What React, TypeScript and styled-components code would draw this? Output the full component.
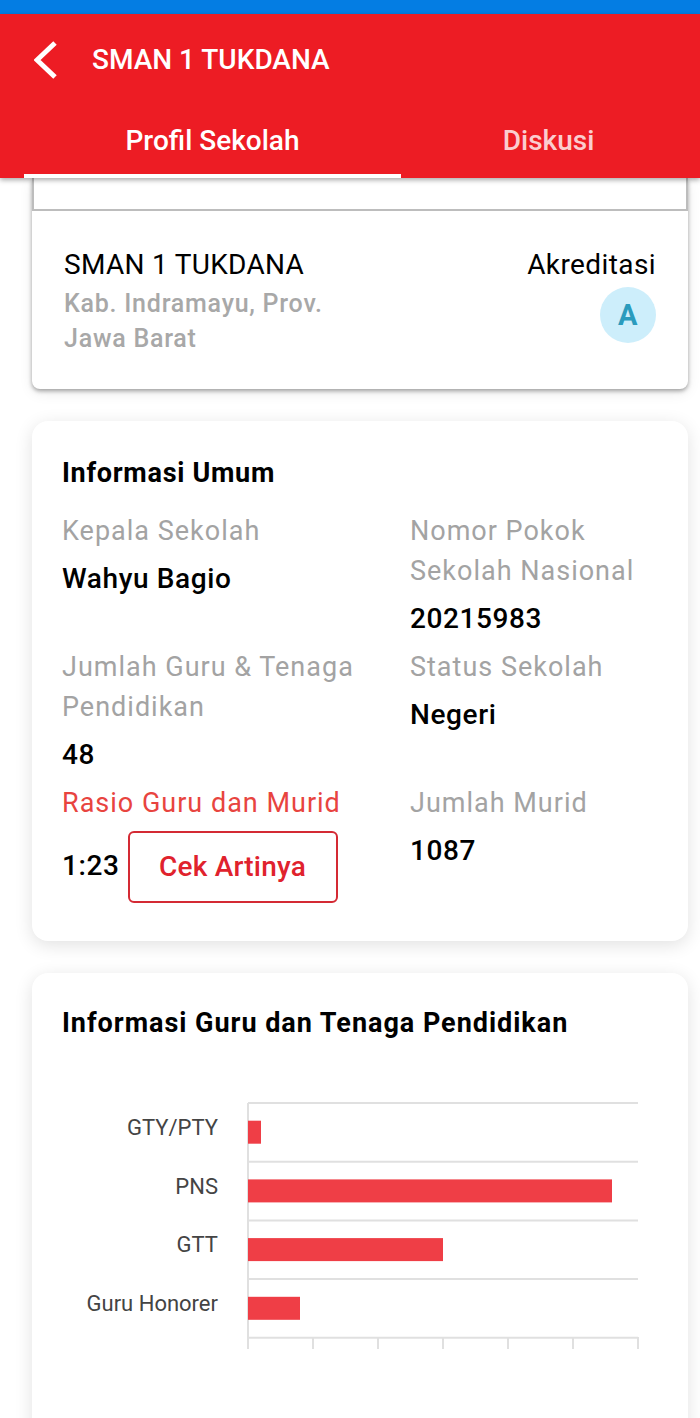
import React from 'react';
import styled, {createGlobalStyle} from 'styled-components';

const GlobalStyle = createGlobalStyle`
  html, body {
    margin: 0;
    padding: 0;
    background: #fff;
  }
  * {
    box-sizing: border-box;
  }
`;

const Page = styled.div`
  width: 700px;
  height: 1418px;
  overflow: hidden;
  display: flex;
  flex-direction: column;
  font-family: Roboto, "Noto Sans", sans-serif;
  background: #fff;
`;
const StatusBar = styled.div`
  height: 14px;
  flex: none;
  background: #047de3;
`;
const Header = styled.header`
  flex: none;
  height: 164px;
  position: relative;
  z-index: 2;
  display: flex;
  flex-direction: column;
  background: #ed1c24;
  color: #fff;
  box-shadow: 0 2px 5px rgba(0, 0, 0, .35);
`;
const TitleRow = styled.div`
  height: 92px;
  padding: 0 0 0 34px;
  display: flex;
  align-items: center;
  gap: 35px;
`;
const Title = styled.h1`
  margin: 0;
  font-size: 28px;
  font-weight: 500;
  line-height: 34px;
`;
const Tabs = styled.nav`
  flex: 1;
  display: flex;
  padding: 0 4px 0 24px;
`;
const Tab = styled.div<{$active?: boolean; $width: number}>`
  width: ${p => p.$width}px;
  display: flex;
  align-items: center;
  justify-content: center;
  font-size: 28px;
  font-weight: 500;
  color: ${p => (p.$active ? '#fff' : 'rgba(255,255,255,.8)')};
  border-bottom: 4px solid ${p => (p.$active ? '#fff' : 'transparent')};
`;
const Content = styled.main`
  flex: 1;
  display: flex;
  flex-direction: column;
  gap: 32px;
  padding: 0 12px 0 32px;
`;
const Card = styled.section`
  flex: none;
  background: #fff;
  border-radius: 16px;
  box-shadow: 0 4px 18px rgba(0, 0, 0, .12);
`;
const SchoolCard = styled.section`
  flex: none;
  height: 211px;
  background: #fff;
  border-radius: 0 0 8px 8px;
  box-shadow: 0 2px 4px rgba(0, 0, 0, .35), 0 4px 14px rgba(0, 0, 0, .08);
`;
const PhotoEdge = styled.div`
  height: 33px;
  border: solid #bdbdbd;
  border-width: 0 2px 2px 2px;
`;
const SchoolBody = styled.div`
  display: flex;
  justify-content: space-between;
  padding: 36px 32px 0;
`;
const SchoolName = styled.div`
  font-size: 28px;
  line-height: 36px;
  color: #000;
  letter-spacing: .3px;
`;
const SchoolPlace = styled.div`
  width: 290px;
  margin-top: 3px;
  font-size: 25px;
  font-weight: 500;
  line-height: 35px;
  letter-spacing: .76px;
  color: #a8a8a8;
`;
const Accreditation = styled.div`
  display: flex;
  flex-direction: column;
  align-items: flex-end;
  gap: 4px;
  font-size: 28px;
  line-height: 36px;
  letter-spacing: .4px;
  color: #000;
`;
const Grade = styled.div`
  width: 56px;
  height: 56px;
  border-radius: 50%;
  display: flex;
  align-items: center;
  justify-content: center;
  background: #cdeefb;
  color: #2a9bbd;
  font-size: 29px;
  font-weight: 700;
`;
const InfoCard = styled(Card)`
  height: 520px;
  padding: 37px 30px 0;
`;
const ChartCard = styled(Card)`
  height: 520px;
  padding: 35px 30px 0;
`;
const Heading = styled.h2<{$tracking: number}>`
  margin: 0;
  font-size: 27px;
  font-weight: 700;
  line-height: 30px;
  letter-spacing: ${p => p.$tracking}px;
  color: #000;
`;
const InfoGrid = styled.div`
  display: grid;
  grid-template-columns: 348px 1fr;
  grid-auto-rows: 124px;
  row-gap: 12px;
  margin-top: 23px;
`;
const Label = styled.div<{$alert?: boolean}>`
  font-size: 27px;
  line-height: 40px;
  letter-spacing: 1px;
  color: ${p => (p.$alert ? '#e8443f' : '#a3a3a3')};
`;
const Value = styled.div`
  margin-top: 11px;
  font-size: 28px;
  font-weight: 500;
  line-height: 33px;
  letter-spacing: .6px;
  color: #000;
`;
const RatioRow = styled.div`
  display: flex;
  align-items: center;
  gap: 8px;
  margin-top: 8px;
`;
const RatioValue = styled(Value)`
  margin: 0 0 4px;
`;
const CheckButton = styled.button`
  width: 210px;
  height: 72px;
  padding: 0 0 2px;
  background: #fff;
  border: 2px solid #d42a34;
  border-radius: 6px;
  color: #e0222d;
  font-family: inherit;
  font-size: 28px;
  font-weight: 500;
  letter-spacing: .2px;
`;
const ChartSvg = styled.svg`
  display: block;
  margin: 64px 0 0 -30px;
`;

const bars = [
    {label: 'GTY/PTY', width: 13},
    {label: 'PNS', width: 364},
    {label: 'GTT', width: 195},
    {label: 'Guru Honorer', width: 52},
];
const ticks = [216, 281, 346, 411, 476, 541, 606];
const lines = [0, 58.7, 117.4, 176, 234.7];

function Chart() {
    return (
        <ChartSvg width={640} height={260} viewBox="0 0 640 260">
            {lines.map(y => <line key={y} x1={216} x2={606} y1={y + 1} y2={y + 1} stroke="#e0e0e0" strokeWidth={2}/>)}
            {ticks.map(x =>
                <line key={x} x1={x} x2={x} y1={x === 216 ? 1 : 235} y2={247} stroke="#e0e0e0" strokeWidth={2}/>
            )}
            {bars.map((b, i) =>
                <g key={b.label}>
                    <rect x={216} y={18.7 + i * 58.7} width={b.width} height={23} fill="#ef3e46"/>
                    <text x={186} y={33 + i * 58.7} textAnchor="end" fontSize={22} fill="#444"
                          fontFamily="Roboto, sans-serif">{b.label}</text>
                </g>
            )}
        </ChartSvg>
    );
}

export default function App() {
    return (
        <Page>
            <GlobalStyle/>
            <StatusBar/>
            <Header>
                <TitleRow>
                    <svg width="23" height="38" viewBox="0 0 23 38" fill="none">
                        <path d="M21 2 3 19l18 17" stroke="#fff" strokeWidth="5"/>
                    </svg>
                    <Title>SMAN 1 TUKDANA</Title>
                </TitleRow>
                <Tabs>
                    <Tab $active $width={377}>Profil Sekolah</Tab>
                    <Tab $width={295}>Diskusi</Tab>
                </Tabs>
            </Header>
            <Content>
                <SchoolCard>
                    <PhotoEdge/>
                    <SchoolBody>
                        <div>
                            <SchoolName>SMAN 1 TUKDANA</SchoolName>
                            <SchoolPlace>Kab. Indramayu, Prov. Jawa Barat</SchoolPlace>
                        </div>
                        <Accreditation>
                            Akreditasi
                            <Grade>A</Grade>
                        </Accreditation>
                    </SchoolBody>
                </SchoolCard>
                <InfoCard>
                    <Heading $tracking={.71}>Informasi Umum</Heading>
                    <InfoGrid>
                        <div>
                            <Label>Kepala Sekolah</Label>
                            <Value>Wahyu Bagio</Value>
                        </div>
                        <div>
                            <Label>Nomor Pokok Sekolah Nasional</Label>
                            <Value>20215983</Value>
                        </div>
                        <div>
                            <Label>Jumlah Guru &amp; Tenaga Pendidikan</Label>
                            <Value>48</Value>
                        </div>
                        <div>
                            <Label>Status Sekolah</Label>
                            <Value>Negeri</Value>
                        </div>
                        <div>
                            <Label $alert>Rasio Guru dan Murid</Label>
                            <RatioRow>
                                <RatioValue>1:23</RatioValue>
                                <CheckButton>Cek Artinya</CheckButton>
                            </RatioRow>
                        </div>
                        <div>
                            <Label>Jumlah Murid</Label>
                            <Value>1087</Value>
                        </div>
                    </InfoGrid>
                </InfoCard>
                <ChartCard>
                    <Heading $tracking={.97}>Informasi Guru dan Tenaga Pendidikan</Heading>
                    <Chart/>
                </ChartCard>
            </Content>
        </Page>
    );
}
